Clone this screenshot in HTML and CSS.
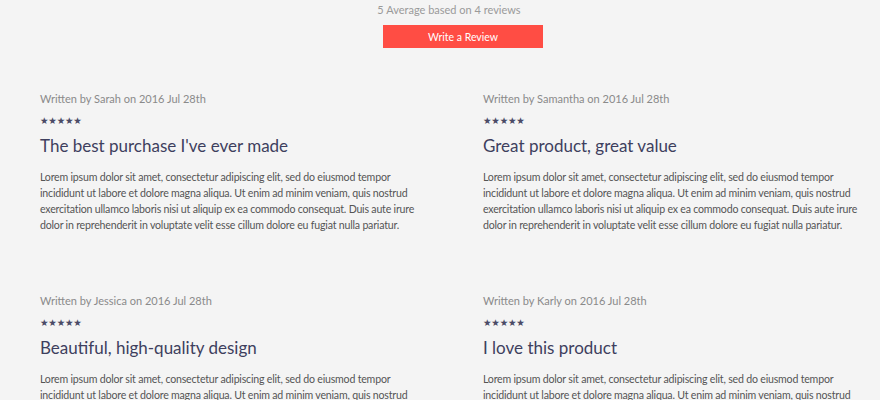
FILE: index.html
```html
<!DOCTYPE html>
<html lang="en">
<head>
    <meta charset="UTF-8">
    <meta name="viewport" content="width=device-width, initial-scale=1.0">
    <title>Reviews</title>
    <link rel="stylesheet" href="styles.css">
</head>
<body>
    <div class="reviews">
        <!-- Summary -->
        <div class="summary">
            <p class="summary-text">5 Average based on 4 reviews</p>
            <button class="write-btn">Write a Review</button>
        </div>

        <!-- Review list -->
        <div class="review-grid">
            <div class="review">
                <p class="review-meta">Written by Sarah on 2016 Jul 28th</p>
                <div class="stars">★★★★★</div>
                <h2 class="review-title">The best purchase I've ever made</h2>
                <p class="review-body">Lorem ipsum dolor sit amet, consectetur adipiscing elit, sed do eiusmod tempor incididunt ut labore et dolore magna aliqua. Ut enim ad minim veniam, quis nostrud exercitation ullamco laboris nisi ut aliquip ex ea commodo consequat. Duis aute irure dolor in reprehenderit in voluptate velit esse cillum dolore eu fugiat nulla pariatur.</p>
            </div>
            <div class="review">
                <p class="review-meta">Written by Samantha on 2016 Jul 28th</p>
                <div class="stars">★★★★★</div>
                <h2 class="review-title">Great product, great value</h2>
                <p class="review-body">Lorem ipsum dolor sit amet, consectetur adipiscing elit, sed do eiusmod tempor incididunt ut labore et dolore magna aliqua. Ut enim ad minim veniam, quis nostrud exercitation ullamco laboris nisi ut aliquip ex ea commodo consequat. Duis aute irure dolor in reprehenderit in voluptate velit esse cillum dolore eu fugiat nulla pariatur.</p>
            </div>
            <div class="review">
                <p class="review-meta">Written by Jessica on 2016 Jul 28th</p>
                <div class="stars">★★★★★</div>
                <h2 class="review-title">Beautiful, high-quality design</h2>
                <p class="review-body">Lorem ipsum dolor sit amet, consectetur adipiscing elit, sed do eiusmod tempor incididunt ut labore et dolore magna aliqua. Ut enim ad minim veniam, quis nostrud exercitation ullamco laboris nisi ut aliquip ex ea commodo consequat. Duis aute irure dolor in reprehenderit in voluptate velit esse cillum dolore eu fugiat nulla pariatur.</p>
            </div>
            <div class="review">
                <p class="review-meta">Written by Karly on 2016 Jul 28th</p>
                <div class="stars">★★★★★</div>
                <h2 class="review-title">I love this product</h2>
                <p class="review-body">Lorem ipsum dolor sit amet, consectetur adipiscing elit, sed do eiusmod tempor incididunt ut labore et dolore magna aliqua. Ut enim ad minim veniam, quis nostrud exercitation ullamco laboris nisi ut aliquip ex ea commodo consequat. Duis aute irure dolor in reprehenderit in voluptate velit esse cillum dolore eu fugiat nulla pariatur.</p>
            </div>
        </div>
    </div>
</body>
</html>
```

FILE: styles.css
```css
/* Page */
body {
    margin: 0;
    padding: 0;
    background-color: #f4f4f4;
    font-family: 'Lato', 'Liberation Sans', sans-serif;
}

.reviews {
    width: 100%;
}

/* Summary */
.summary {
    display: flex;
    flex-direction: column;
    align-items: center;
    padding-top: 3px;
}

.summary-text {
    margin: 0 0 0 18px;
    font-size: 11px;
    line-height: 14px;
    color: #9a9a9a;
}

.write-btn {
    margin: 8px 0 0 46px;
    width: 160px;
    height: 23px;
    border: none;
    background-color: #ff4d44;
    color: #fff;
    font-family: 'Lato', sans-serif;
    font-size: 10.5px;
    font-weight: normal;
    cursor: pointer;
}

/* Reviews */
.review-grid {
    display: grid;
    grid-template-columns: 386px 386px;
    column-gap: 57px;
    row-gap: 0;
    padding: 43px 11px 0 40px;
}

.review {
    height: 202px;
}

.review-meta {
    margin: 0;
    font-size: 11px;
    line-height: 16px;
    color: #8a8a8a;
}

.stars {
    margin-top: 8px;
    font-family: 'DejaVu Sans', sans-serif;
    font-size: 9.5px;
    line-height: 12px;
    letter-spacing: -0.2px;
    color: #4a4a66;
}

.review-title {
    margin: 6px 0 0;
    font-family: 'Lato', sans-serif;
    font-weight: normal;
    font-size: 17px;
    line-height: 26px;
    color: #3e3f5e;
}

.review-body {
    margin: 10px 0 0;
    font-size: 10.6px;
    line-height: 16px;
    letter-spacing: -0.2px;
    color: #555;
}
```
